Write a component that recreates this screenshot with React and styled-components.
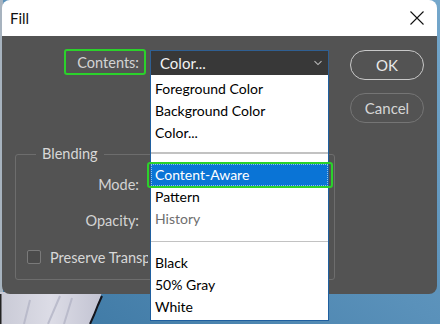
import React from "react";
import styled, { createGlobalStyle } from "styled-components";

const Global = createGlobalStyle`
  html, body { margin: 0; padding: 0; width: 440px; height: 324px; overflow: hidden; }
  body { font-family: Lato, "Noto Sans", sans-serif; -webkit-font-smoothing: antialiased; }
  * { box-sizing: border-box; }
`;

const Desktop = styled.div`
  position: relative;
  width: 440px;
  height: 324px;
  overflow: hidden;
  padding-left: 2px;
`;

const Backdrop = styled.svg`
  position: absolute;
  inset: 0;
  z-index: 0;
`;

const Dialog = styled.div`
  position: relative;
  z-index: 1;
  width: 435px;
  display: flex;
  flex-direction: column;
`;

const TitleBar = styled.div`
  height: 36px;
  background: #ffffff;
  border-radius: 8px 8px 0 0;
  display: flex;
  align-items: center;
  justify-content: space-between;
  padding: 0 13px 0 8px;
`;

const Title = styled.span`
  font-size: 15px;
  color: #111;
  margin-top: -1px;
`;

const CloseIcon = styled.svg`
  display: block;
  margin-top: -1px;
`;

const Body = styled.div`
  position: relative;
  height: 258px;
  background: #535353;
  border-radius: 0 0 8px 8px;
  display: flex;
`;

const FormColumn = styled.div`
  width: 348px;
  padding: 13px 0 0 13px;
  display: flex;
  flex-direction: column;
`;

const ContentsRow = styled.div`
  display: flex;
  align-items: flex-end;
  margin-left: 49px;
`;

const LabelBox = styled.div`
  width: 82px;
  height: 26px;
  border: 2px solid #2bd12b;
  border-radius: 3px;
  display: flex;
  align-items: center;
  justify-content: flex-end;
  padding-right: 5px;
  font-size: 14.5px;
  color: #d4d4d4;
`;

const Select = styled.div`
  margin-left: 4px;
  width: 179px;
  height: 25px;
  background: #383838;
  border: 1px solid #2f5f92;
  border-bottom: none;
  display: flex;
  align-items: center;
  justify-content: space-between;
  padding: 0 5px 0 9px;
  font-size: 15px;
  color: #f2f2f2;
`;

const Fieldset = styled.fieldset`
  margin: 70px 0 0 0;
  width: 320px;
  padding: 0 0 10px 0;
  border: 1px solid #6d6d6d;
  border-radius: 3px;
  min-width: 0;
`;

const Legend = styled.legend`
  margin-left: 20px;
  padding: 0 6px;
  font-size: 14.5px;
  line-height: 18px;
  color: #d8d8d8;
`;

const FieldRows = styled.div`
  display: flex;
  flex-direction: column;
  gap: 12px;
  padding-top: 9px;
`;

const FieldRow = styled.div`
  height: 24px;
  display: flex;
  align-items: center;
`;

const FieldLabel = styled.span`
  width: 123px;
  text-align: right;
  font-size: 14.5px;
  color: #d4d4d4;
`;

const CheckRow = styled.div`
  height: 24px;
  display: flex;
  align-items: center;
  gap: 9px;
  padding-left: 11px;
  margin-top: 1px;
`;

const CheckLabel = styled.span`
  width: 98px;
  overflow: hidden;
  white-space: nowrap;
  font-size: 14.5px;
  color: #d8d8d8;
`;

const Checkbox = styled.span`
  width: 14px;
  height: 14px;
  flex: none;
  border: 1px solid #7a7a7a;
  border-radius: 2px;
  background: #4b4b4b;
`;

const ButtonColumn = styled.div`
  padding-top: 14px;
  display: flex;
  flex-direction: column;
  gap: 13px;
`;

const Button = styled.button`
  width: 74px;
  height: 30px;
  border-radius: 15px;
  border: 1.5px solid ${(p) => (p.$primary ? "#c8c8c8" : "#757575")};
  background: transparent;
  color: ${(p) => (p.$primary ? "#e8e8e8" : "#d6d6d6")};
  font-family: Lato, "Noto Sans", sans-serif;
  font-size: 15px;
  padding: 0 0 1px 0;
`;

const ListBox = styled.div`
  position: absolute;
  left: 148px;
  top: 39px;
  width: 179px;
  height: 246px;
  background: #ffffff;
  border: 1px solid #1f5f9f;
  border-top: none;
  padding: 3px 0 0 0;
  display: flex;
  flex-direction: column;
  z-index: 2;
`;

const Item = styled.div`
  position: relative;
  height: 22px;
  line-height: 22px;
  padding-left: 4px;
  font-size: 14px;
  color: ${(p) => (p.$selected ? "#ffffff" : p.$disabled ? "#6e6e6e" : "#000000")};
  background: ${(p) => (p.$selected ? "#0a74d6" : "transparent")};
  outline: ${(p) => (p.$selected ? "1px dotted rgba(255,255,255,0.55)" : "none")};
  outline-offset: -1px;
`;

const Highlight = styled.span`
  position: absolute;
  left: -4px;
  right: -5px;
  top: -2px;
  bottom: -2px;
  border: 2px solid #2bd12b;
  border-radius: 3px;
  pointer-events: none;
`;

const Separator = styled.div`
  height: ${(p) => p.$h}px;
  display: flex;
  align-items: flex-start;
  padding-top: ${(p) => p.$top}px;
  &::after {
    content: "";
    display: block;
    width: 100%;
    height: ${(p) => p.$line}px;
    background: #c2c2c2;
  }
`;

const Chevron = () => (
  <svg width="10" height="6" viewBox="0 0 10 6">
    <path d="M1.5 1.2 L5 4.6 L8.5 1.2" fill="none" stroke="#b8b8b8" strokeWidth="1.1" />
  </svg>
);

export default function App() {
  return (
    <Desktop>
      <Global />
      <Backdrop width="440" height="324" viewBox="0 0 440 324">
        <defs>
          <linearGradient id="sky" x1="0" y1="1" x2="1" y2="0">
            <stop offset="0" stopColor="#3b76a2" />
            <stop offset="0.5" stopColor="#5a91ba" />
            <stop offset="1" stopColor="#74a7cb" />
          </linearGradient>
          <linearGradient id="snow" x1="0" y1="0" x2="1" y2="0">
            <stop offset="0" stopColor="#c9cad6" />
            <stop offset="0.5" stopColor="#dcdce6" />
            <stop offset="1" stopColor="#c2c3d2" />
          </linearGradient>
        </defs>
        <rect width="440" height="324" fill="url(#sky)" />
        <rect x="0" y="0" width="3" height="300" fill="#a7b3bf" />
        <path d="M0 292 L102 292 L98 304 L93 316 L90 324 L0 324 Z" fill="url(#snow)" />
        <path d="M102 296 L98 305 L94 315 L90 324" fill="none" stroke="#15151c" strokeWidth="2" />
        <path d="M60 296 L48 324 M72 298 L64 324 M30 300 L24 324" fill="none" stroke="#b3b4c6" strokeWidth="2" opacity="0.8" />
        <rect x="0" y="294" width="1.5" height="30" fill="#222" />
      </Backdrop>
      <Dialog>
        <TitleBar>
          <Title>Fill</Title>
          <CloseIcon width="14" height="14" viewBox="0 0 14 14">
            <path d="M0.5 0.5 L13.5 13.5 M13.5 0.5 L0.5 13.5" stroke="#111" strokeWidth="1.1" />
          </CloseIcon>
        </TitleBar>
        <Body>
          <FormColumn>
            <ContentsRow>
              <LabelBox>Contents:</LabelBox>
              <Select>
                <span>Color...</span>
                <Chevron />
              </Select>
            </ContentsRow>
            <Fieldset>
              <Legend>Blending</Legend>
              <FieldRows>
                <FieldRow>
                  <FieldLabel>Mode:</FieldLabel>
                </FieldRow>
                <FieldRow>
                  <FieldLabel>Opacity:</FieldLabel>
                </FieldRow>
                <CheckRow>
                  <Checkbox />
                  <CheckLabel>Preserve Transparency</CheckLabel>
                </CheckRow>
              </FieldRows>
            </Fieldset>
          </FormColumn>
          <ButtonColumn>
            <Button $primary>OK</Button>
            <Button>Cancel</Button>
          </ButtonColumn>
          <ListBox>
            <Item>Foreground Color</Item>
            <Item>Background Color</Item>
            <Item>Color...</Item>
            <Separator $h={20} $top={8} $line={2} />
            <Item $selected>
              Content-Aware
              <Highlight />
            </Item>
            <Item>Pattern</Item>
            <Item $disabled>History</Item>
            <Separator $h={22} $top={11} $line={1} />
            <Item>Black</Item>
            <Item>50% Gray</Item>
            <Item>White</Item>
          </ListBox>
        </Body>
      </Dialog>
    </Desktop>
  );
}
